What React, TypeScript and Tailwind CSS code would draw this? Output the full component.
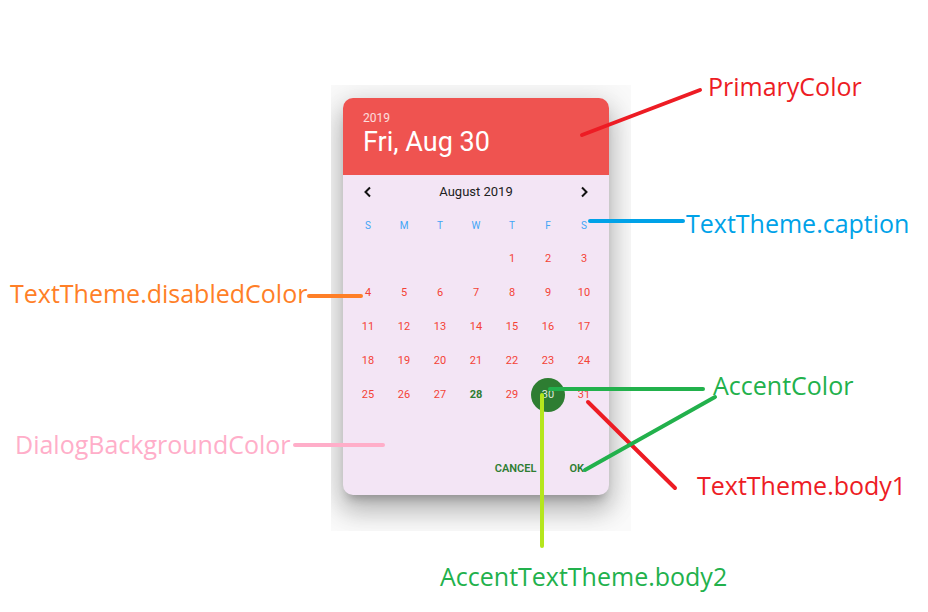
import React from "react";

const WEEKDAYS = ["S", "M", "T", "W", "T", "F", "S"];

const LABELS = [
  { text: "PrimaryColor", left: 708, top: 71, color: "#ED1C24" },
  { text: "TextTheme.caption", left: 686, top: 208, color: "#00A2E8" },
  { text: "TextTheme.disabledColor", left: 10, top: 278, color: "#FF7F27" },
  { text: "DialogBackgroundColor", left: 15, top: 429, color: "#FFAEC9" },
  { text: "AccentColor", left: 713, top: 370, color: "#22B14C" },
  { text: "TextTheme.body1", left: 697, top: 470, color: "#ED1C24" },
  { text: "AccentTextTheme.body2", left: 440, top: 561, color: "#22B14C" },
];

const LINES = [
  { x1: 582, y1: 135, x2: 700, y2: 90, c: "#ED1C24" },
  { x1: 590, y1: 221, x2: 683, y2: 221, c: "#00A2E8" },
  { x1: 309, y1: 296, x2: 361, y2: 296, c: "#FF7F27" },
  { x1: 295, y1: 445, x2: 383, y2: 445, c: "#FFAEC9" },
  { x1: 542, y1: 395, x2: 542, y2: 546, c: "#B5E61D" },
  { x1: 588, y1: 402, x2: 675, y2: 488, c: "#ED1C24" },
  { x1: 550, y1: 389, x2: 703, y2: 389, c: "#22B14C" },
  { x1: 585, y1: 470, x2: 715, y2: 397, c: "#22B14C" },
];

function Chevron({ dir }: { dir: "left" | "right" }) {
  return (
    <svg width="10" height="12" viewBox="0 0 10 12">
      <path
        d={dir === "left" ? "M7 1.5 L2.5 6 L7 10.5" : "M3 1.5 L7.5 6 L3 10.5"}
        fill="none"
        stroke="#111"
        strokeWidth="2"
      />
    </svg>
  );
}

function DatePicker() {
  const cells: (number | null)[] = [null, null, null, null];
  for (let d = 1; d <= 31; d++) cells.push(d);

  return (
    <div className="ml-[12px] mt-[13px] w-[266px] h-[397px] rounded-[10px] overflow-hidden bg-[#F3E5F5] flex flex-col shadow-[0_16px_24px_2px_rgba(0,0,0,0.18),0_6px_30px_5px_rgba(0,0,0,0.13),0_8px_10px_-5px_rgba(0,0,0,0.24)] font-['Roboto',sans-serif]">
      <div className="bg-[#EF5350] h-[77px] pl-[20px] pt-[12px] text-white">
        <div className="text-[12px] leading-[16px] text-white/80">2019</div>
        <div className="text-[27px] leading-[32px]">Fri, Aug 30</div>
      </div>
      <div className="px-[7px]">
        <div className="grid grid-cols-7 h-[33px] items-center">
          <div className="flex justify-center">
            <Chevron dir="left" />
          </div>
          <div className="col-span-5 text-center text-[13px] text-[#212121]">August 2019</div>
          <div className="flex justify-center">
            <Chevron dir="right" />
          </div>
        </div>
        <div className="grid grid-cols-7 h-[34px] items-center">
          {WEEKDAYS.map((w, i) => (
            <div key={i} className="text-center text-[10px] text-[#42A5F5]">
              {w}
            </div>
          ))}
        </div>
        <div className="grid grid-cols-7">
          {cells.map((d, i) => (
            <div key={i} className="h-[34px] flex items-center justify-center text-[11px]">
              {d === 30 ? (
                <div className="w-[34px] h-[34px] rounded-full bg-[#2E7D32] flex items-center justify-center text-[#dfe8dc]">
                  30
                </div>
              ) : d === 28 ? (
                <span className="text-[#2E7D32] font-bold">28</span>
              ) : d ? (
                <span className="text-[#F44336]">{d}</span>
              ) : null}
            </div>
          ))}
        </div>
      </div>
      <div className="mt-auto mb-[8px] h-[36px] flex items-center justify-end gap-[33px] pr-[25px] text-[11px] font-semibold text-[#2E7D32]">
        <span>CANCEL</span>
        <span>OK</span>
      </div>
    </div>
  );
}

export default function App() {
  return (
    <div className="relative w-[928px] h-[612px] bg-white overflow-hidden">
      <div className="absolute left-[331px] top-[85px] w-[300px] h-[446px] bg-[#fafafa] overflow-hidden">
        <DatePicker />
      </div>

      <svg className="absolute inset-0" width="928" height="612">
        {LINES.map((l, i) => (
          <line key={i} x1={l.x1} y1={l.y1} x2={l.x2} y2={l.y2} stroke={l.c} strokeWidth="4" strokeLinecap="round" />
        ))}
      </svg>

      {LABELS.map((l) => (
        <div
          key={l.text}
          className="absolute text-[25px] leading-[30px] whitespace-nowrap font-['Open_Sans',sans-serif]"
          style={{ left: l.left, top: l.top, color: l.color }}
        >
          {l.text}
        </div>
      ))}
    </div>
  );
}
